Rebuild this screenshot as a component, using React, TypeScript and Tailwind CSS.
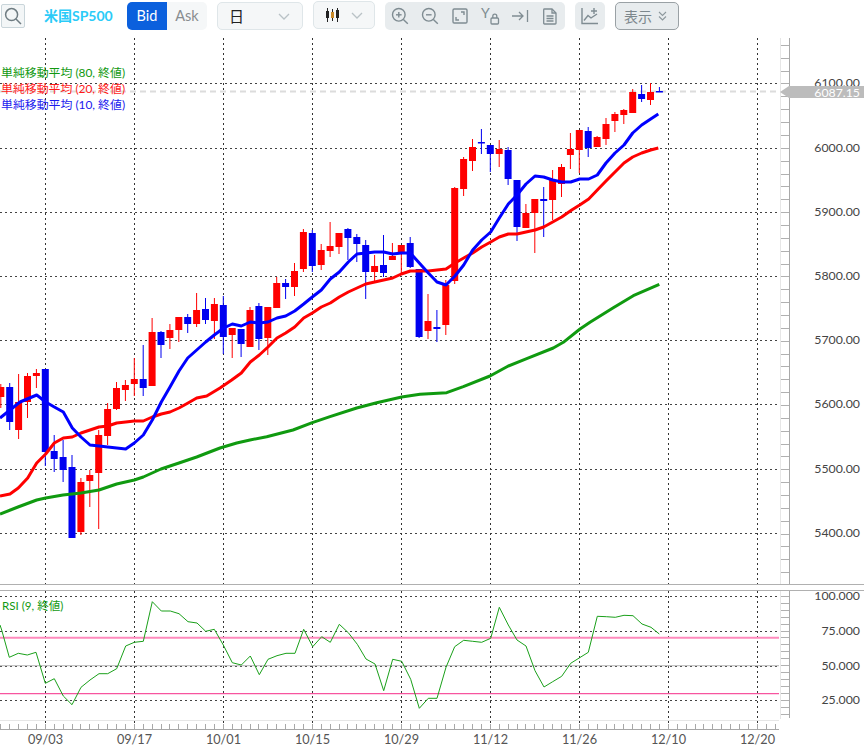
import React from "react";

type C = ["r" | "b", number, number, number, number];
const candles: C[] = [
  ["r",384,408,387,397],["b",383,430,387,422],["r",374,439,402,430],["r",373,418,376,402],["r",369,388,373,376],
  ["b",369,466,369,452],["b",435,472,451,459],["b",440,482,457,470],["b",455,538,467,538],["r",478,535,482,532],
  ["r",470,507,475,481],["r",430,529,435,473],["r",403,445,409,436],["r",382,410,388,409],["r",380,401,385,390],
  ["r",358,396,379,384],["b",345,396,379,388],["r",318,386,332,386],["b",331,358,332,345],["r",324,349,330,338],
  ["r",317,342,317,330],["b",314,333,317,324],["r",293,327,310,324],["b",298,324,309,320],["r",298,339,304,321],
  ["b",296,354,305,337],["r",328,358,328,335],["b",329,357,329,344],["r",307,347,310,347],["b",303,350,306,339],
  ["r",307,355,307,338],["r",277,308,283,308],["b",279,299,283,287],["r",263,296,271,287],["r",229,272,232,269],
  ["b",230,272,233,266],["r",244,270,250,265],["r",222,257,246,251],["r",233,254,233,247],["b",228,260,229,238],
  ["b",234,262,237,244],["b",240,299,245,272],["r",255,283,266,272],["b",235,277,265,273],["r",243,260,256,260],
  ["r",245,273,245,252],["b",237,268,243,267],["b",269,338,269,337],["r",294,339,321,331],["b",310,342,327,329],
  ["r",280,335,285,325],["r",187,284,188,281],["r",157,196,159,189],["r",139,171,147,161],["b",129,154,142,143],
  ["b",145,172,145,154],["r",140,167,149,154],["b",147,185,150,179],["b",180,241,180,227],["r",204,228,213,228],
  ["r",199,253,199,213],["b",187,237,199,201],["r",170,220,180,200],["r",164,197,167,184],["r",133,169,149,155],
  ["r",130,173,130,150],["b",127,157,131,148],["r",136,147,137,147],["r",118,145,124,139],["r",112,132,114,121],
  ["r",109,124,110,115],["r",89,113,92,113],["b",85,102,94,99],["r",83,105,92,100],["b",87,92,91,92],
];

const blue = "0,418 10,410 20,402 36.7,395 45.7,402 54.3,407 63.3,412 72.3,428 81,437 90,445 99,446 107.7,447 116.7,448 125.7,449 134.3,443 143.3,435 152.3,420 161.3,402 170,387 179,371 187.7,358 196.7,350 205.7,342 214.3,335 223.7,328 232.3,324 241.3,326 250.3,322 259.3,323 268,322 277,318 285.7,316 294.7,311 303.7,304 312.3,297 321.3,290 330.3,279 339.3,272 348.3,262 357,254 365.7,253 374.7,252 383.7,252 392.7,254 401.3,253 410.3,253 419.3,263 428.3,273 437,282 446,285 455,276 463.7,265 472.7,250 481.7,240 490.7,232 499.3,218 508.3,204 517,195 526,184 535,176 543.7,177 552.7,180 561.7,182 570.7,182 579.7,179 588.7,179 597.3,175 606,163 615,153 624,145 632.7,133 641.7,125 650.7,119 658.3,114";
const red = "0,496 10,494 18.3,488 27.7,478 36.7,463 45.7,454 54.3,443 63.3,438 72.3,437 81,433 90,430 99,427 107.7,426 116.7,423 125.7,422 134.3,421 143.3,421 152.3,417 161.3,414 170,412 179,408 188,403 196.7,398 206.7,396 220,388 231.7,380 241.3,373 250.3,362 259.3,355 268,347 277,338 285.7,333 294.7,327 303.7,318 312.3,313 321.3,307 330.3,303 339.3,297 348.3,292 357,288 365.7,284 374.7,282 383.7,280 392.7,278 401.3,274 410.3,271 419.3,271 428.3,271 437,270 446,269 455,263 463.7,258 472.7,253 481.7,247 490.7,242 499.3,237 508.3,234 517,234 526,232 535,230 543.7,227 552.7,222 561.7,217 571.7,210 579.7,205 588.7,199 597.3,190 606,181 615,172 624,163 632.7,157 641.7,153 650.7,150 658.3,148";
const green = "0,514 18,507 36.7,500 45.7,498 63,495 81,493 99,490 116.7,484 134.3,480 143.3,477 161,469 179,463 196.7,457 220,448 236.7,443 250,440 266.7,436.7 293,430 312.3,422.7 330,416.7 356.7,408 376.7,402.7 401.7,397 420,394.3 446.7,392.7 463.3,386.7 490,376 508.3,366 526.7,358.7 553.3,348 563.3,342.3 580,329 590,322.3 613.3,307.7 633.3,295.7 659.3,284.3";

const rsiZ: [number, number][] = [[0,135],[5,150],[28,232],[55,220],[82,225],[108,217],[136,310],[163,296],[190,348],[216,374],[243,322],[270,300],[297,281],[323,281],[350,266],[377,198],[403,187],[430,184],[457,65],[484,93],[511,93],[537,101],[564,125],[591,129],[617,154],[643,148],[670,195],[697,248],[724,255],[751,228],[778,284],[804,238],[831,227],[858,220],[885,220],[911,148],[938,200],[965,170],[991,187],[1018,133],[1045,158],[1072,193],[1098,237],[1125,252],[1151,332],[1178,238],[1205,244],[1232,298],[1258,385],[1285,355],[1296,355],[1311,355],[1338,262],[1364,200],[1391,181],[1418,184],[1445,187],[1472,175],[1498,82],[1525,135],[1551,180],[1578,198],[1605,272],[1632,321],[1658,305],[1685,289],[1712,250],[1739,233],[1765,217],[1792,109],[1819,110],[1846,112],[1872,106],[1899,107],[1926,132],[1953,142],[1978,162]];
const rsi = rsiZ.map(([x, y]) => `${(x / 3).toFixed(1)},${(580 + y / 3).toFixed(1)}`).join(" ");

const vGrid = [45.5, 134.5, 223.5, 312.5, 401.5, 490.5, 579.5, 668.5, 757.5];
const hGrid = [83.5, 148.5, 212.5, 276.5, 340.5, 404.5, 469.5, 533.5];
const rsiGrid = [596.5, 631.5, 666.5, 700.5];
const prices = ["6100.00", "6000.00", "5900.00", "5800.00", "5700.00", "5600.00", "5500.00", "5400.00"];
const rsiLabels = ["100.000", "75.000", "50.000", "25.000"];
const dates = ["09/03", "09/17", "10/01", "10/15", "10/29", "11/12", "11/26", "12/10", "12/20"];

const axisTicks: number[] = [];
for (let y = 45.4; y < 582; y += 12.86) axisTicks.push(Math.floor(y) + 0.5);
const rsiTicks: number[] = [];
for (let y = 596.3; y < 719; y += 6.94) rsiTicks.push(Math.floor(y) + 0.5);
const timeTicks: number[] = [];
for (let i = -5; i < 83; i++) timeTicks.push(Math.floor(45.3 + 8.9 * i) + 0.5);

const ic = "#7f8c92";

function Chevron({ w = 12 }: { w?: number }) {
  return (
    <svg width={w} height="7" viewBox="0 0 12 7" fill="none" stroke="#b9c2c6" strokeWidth="1.3">
      <path d="M1 1l5 5 5-5" />
    </svg>
  );
}

function Mag({ kind }: { kind: "plus" | "minus" }) {
  return (
    <svg width="18" height="18" viewBox="0 0 18 18" fill="none" stroke={ic} strokeWidth="1.4">
      <circle cx="7.8" cy="7.8" r="6.3" />
      <path d="M12.4 12.4l4.4 4.4" />
      <path d="M5 7.8h5.6" />
      {kind === "plus" && <path d="M7.8 5v5.6" />}
    </svg>
  );
}

export default function App() {
  return (
    <div className="w-[864px] h-[747px] bg-white overflow-hidden font-['Lato','Noto_Sans_CJK_JP',sans-serif]">
      <header className="h-[37px] flex items-start">
        <button className="ml-[1px] mt-[4px] w-[24px] h-[24px] flex items-center justify-center bg-[#f3f6f7] border border-[#c9d5da] rounded-[2px]">
          <svg width="18" height="18" viewBox="0 0 18 18" fill="none" stroke="#6f7c82" strokeWidth="1.5">
            <circle cx="7.6" cy="7.6" r="6" />
            <path d="M12 12l5 5" />
          </svg>
        </button>
        <div className="ml-[19px] mt-[6px] w-[83px] text-[14px] leading-[20px] font-bold text-[#2bcbf8]">米国SP500</div>
        <div className="mt-[2px] flex h-[28px] rounded-[5px] overflow-hidden text-[14.5px]">
          <div className="w-[40px] flex items-center justify-center bg-[#0b60dd] text-white">Bid</div>
          <div className="w-[40px] flex items-center justify-center bg-[#f5f7f8] text-[#888c8f]">Ask</div>
        </div>
        <div className="ml-[10px] mt-[2px] w-[86px] h-[28px] flex items-center justify-between pl-[11px] pr-[12px] bg-[#f5f7f8] border border-[#dfe6e9] rounded-[5px] text-[15px] text-[#222]">
          <span>日</span>
          <Chevron />
        </div>
        <div className="ml-[10px] mt-[1px] w-[62px] h-[28px] flex items-center justify-between pl-[12px] pr-[11px] bg-[#f5f7f8] border border-[#dfe6e9] rounded-[5px]">
          <svg width="14" height="14" viewBox="0 0 14 14">
            <path d="M1.5 0v14M6.5 1v12M11.5 0v14" stroke="#222" strokeWidth="1" />
            <rect x="0" y="3" width="3" height="7" fill="#222" />
            <rect x="5" y="4" width="3" height="6" fill="#c98a2a" />
            <rect x="10" y="2" width="3" height="8" fill="#222" />
          </svg>
          <Chevron />
        </div>
        <div className="ml-[10px] mt-[2px] w-[180px] h-[28px] flex bg-[#e8ecee] rounded-[5px]">
          <div className="w-[30px] flex items-center justify-center"><Mag kind="plus" /></div>
          <div className="w-[30px] flex items-center justify-center"><Mag kind="minus" /></div>
          <div className="w-[30px] flex items-center justify-center">
            <svg width="16" height="16" viewBox="0 0 16 16" fill="none" stroke={ic} strokeWidth="1.4">
              <rect x="1" y="1" width="14" height="14" rx="1.2" />
              <path d="M9 4h3v3M4 9v3h3" />
            </svg>
          </div>
          <div className="w-[30px] flex items-center justify-center relative">
            <span className="absolute left-[6px] top-[3px] text-[14px] leading-[16px] text-[#7f8c92]">Y</span>
            <svg className="ml-[10px] mt-[5px]" width="10" height="12" viewBox="0 0 10 12" fill="none" stroke={ic} strokeWidth="1.3">
              <rect x="1" y="5" width="7.5" height="6" rx="1" />
              <path d="M2.8 5V3.2a2 2 0 0 1 4 0V5" />
            </svg>
          </div>
          <div className="w-[30px] flex items-center justify-center">
            <svg width="17" height="14" viewBox="0 0 17 14" fill="none" stroke={ic} strokeWidth="1.3">
              <path d="M0 7h11M7 3l4 4-4 4M15.5 1v12" />
            </svg>
          </div>
          <div className="w-[30px] flex items-center justify-center">
            <svg width="14" height="17" viewBox="0 0 14 17" fill="none" stroke={ic} strokeWidth="1.3">
              <path d="M1.5 1h7.5l4 4v10.2a.8.8 0 0 1-.8.8H1.5a.8.8 0 0 1-.8-.8V1.8a.8.8 0 0 1 .8-.8z" />
              <path d="M9 1v4h4M3.5 8h7M3.5 10.5h7M3.5 13h7" />
            </svg>
          </div>
        </div>
        <div className="ml-[10px] mt-[2px] w-[30px] h-[28px] flex items-center justify-center bg-[#e8ecee] rounded-[5px]">
          <svg width="18" height="18" viewBox="0 0 18 18" fill="none" stroke={ic} strokeWidth="1.4">
            <path d="M1 1v15.5h16" />
            <path d="M3 13.5l4-5 3 2.5 6-4" />
            <path d="M13 1v6M10 4h6" />
          </svg>
        </div>
        <div className="ml-[10px] mt-[2px] w-[64px] h-[28px] flex items-center pl-[8px] gap-[6px] bg-[#e8ecee] border border-[#9aa1a5] rounded-[5px] text-[14px] text-[#7c878c]">
          <span>表示</span>
          <svg width="9" height="10" viewBox="0 0 9 10" fill="none" stroke="#8d989d" strokeWidth="1.1">
            <path d="M1 1l3.5 3.5L8 1M1 5.5L4.5 9 8 5.5" />
          </svg>
        </div>
      </header>

      <main className="relative w-[864px] h-[710px]">
        <svg width="864" height="710" viewBox="0 37 864 710" className="block">
          {hGrid.map((y) => (
            <line key={y} x1="0" x2="780" y1={y} y2={y} stroke="#444" strokeDasharray="2 3" />
          ))}
          {rsiGrid.map((y) => (
            <line key={y} x1="0" x2="780" y1={y} y2={y} stroke="#444" strokeDasharray="2 3" />
          ))}
          {vGrid.map((x) => (
            <g key={x}>
              <line x1={x} x2={x} y1="38" y2="584" stroke="#333" strokeDasharray="2 3" />
              <line x1={x} x2={x} y1="591" y2="729" stroke="#333" strokeDasharray="2 3" />
            </g>
          ))}

          <line x1="0" x2="779" y1="91.5" y2="91.5" stroke="#dcdcdc" strokeWidth="2" strokeDasharray="6 4" />

          {candles.map(([c, wt, wb, bt, bb], k) => {
            const x = 45.3 + 8.9 * (k - 5);
            const col = c === "r" ? "#ff0000" : "#0000f0";
            return (
              <g key={k}>
                <rect x={x - 0.5} y={wt} width="1" height={wb - wt} fill={col} />
                <rect x={x - 3.5} y={bt} width="7" height={Math.max(bb - bt, 1.5)} fill={col} />
              </g>
            );
          })}

          <polyline points={green} fill="none" stroke="#109a10" strokeWidth="3" strokeLinejoin="round" />
          <polyline points={red} fill="none" stroke="#ff0000" strokeWidth="3" strokeLinejoin="round" />
          <polyline points={blue} fill="none" stroke="#0000ff" strokeWidth="3" strokeLinejoin="round" />

          <line x1="0" x2="779" y1="637.7" y2="637.7" stroke="#ff8abd" strokeWidth="2" />
          <line x1="0" x2="779" y1="693.7" y2="693.7" stroke="#f7559f" strokeWidth="1.3" />
          <line x1="0" x2="779" y1="665.7" y2="665.7" stroke="#b5b5b5" strokeWidth="1" />
          <polyline points={rsi} fill="none" stroke="#1aa01a" strokeWidth="1" />

          <line x1="0" x2="864" y1="584.5" y2="584.5" stroke="#b0b0b0" />
          <line x1="0" x2="864" y1="590.5" y2="590.5" stroke="#b0b0b0" />
          <line x1="780.5" x2="780.5" y1="38" y2="584" stroke="#e6e6e6" />
          <line x1="780.5" x2="780.5" y1="591" y2="719" stroke="#e6e6e6" />
          <line x1="789.5" x2="789.5" y1="38" y2="584" stroke="#a8a8a8" />
          <line x1="789.5" x2="789.5" y1="591" y2="718" stroke="#a8a8a8" />
          {axisTicks.map((y) => (
            <line key={y} x1="781" x2="789" y1={y} y2={y} stroke="#b0b0b0" />
          ))}
          {rsiTicks.map((y) => (
            <line key={y} x1="781" x2="789" y1={y} y2={y} stroke="#b0b0b0" />
          ))}

          <line x1="0" x2="779" y1="720.5" y2="720.5" stroke="#e6e6e6" />
          <line x1="0" x2="779" y1="729.5" y2="729.5" stroke="#a8a8a8" />
          {timeTicks.filter((x) => x < 778).map((x) => (
            <line key={x} x1={x} x2={x} y1="724" y2="729" stroke="#a8a8a8" />
          ))}

          <g fontSize="12.3" fill="#444" textAnchor="end">
            {prices.map((p, i) => (
              <text key={p} x="860" y={hGrid[i] + 3.5}>{p}</text>
            ))}
            {rsiLabels.map((p, i) => (
              <text key={p} x="860" y={rsiGrid[i] + 3.5}>{p}</text>
            ))}
          </g>
          <polygon points="780,92 789,86 864,86 864,98 789,98" fill="#bcbcbc" />
          <text x="860" y="96.5" fontSize="12.3" fill="#fff" textAnchor="end">6087.15</text>
          <g fontSize="12.7" fill="#555" textAnchor="middle">
            {dates.map((d, i) => (
              <text key={d} x={vGrid[i]} y="743.5">{d}</text>
            ))}
          </g>
        </svg>

        <div className="absolute left-[1px] top-[28px] text-[11.9px] leading-[16px] whitespace-nowrap">
          <div className="text-[#119911]">単純移動平均 (80, 終値)</div>
          <div className="text-[#ff1a1a]">単純移動平均 (20, 終値)</div>
          <div className="text-[#1a1aee]">単純移動平均 (10, 終値)</div>
        </div>
        <div className="absolute left-[2px] top-[561px] text-[11.6px] leading-[16px] text-[#119911] whitespace-nowrap">RSI (9, 終値)</div>
      </main>
    </div>
  );
}
